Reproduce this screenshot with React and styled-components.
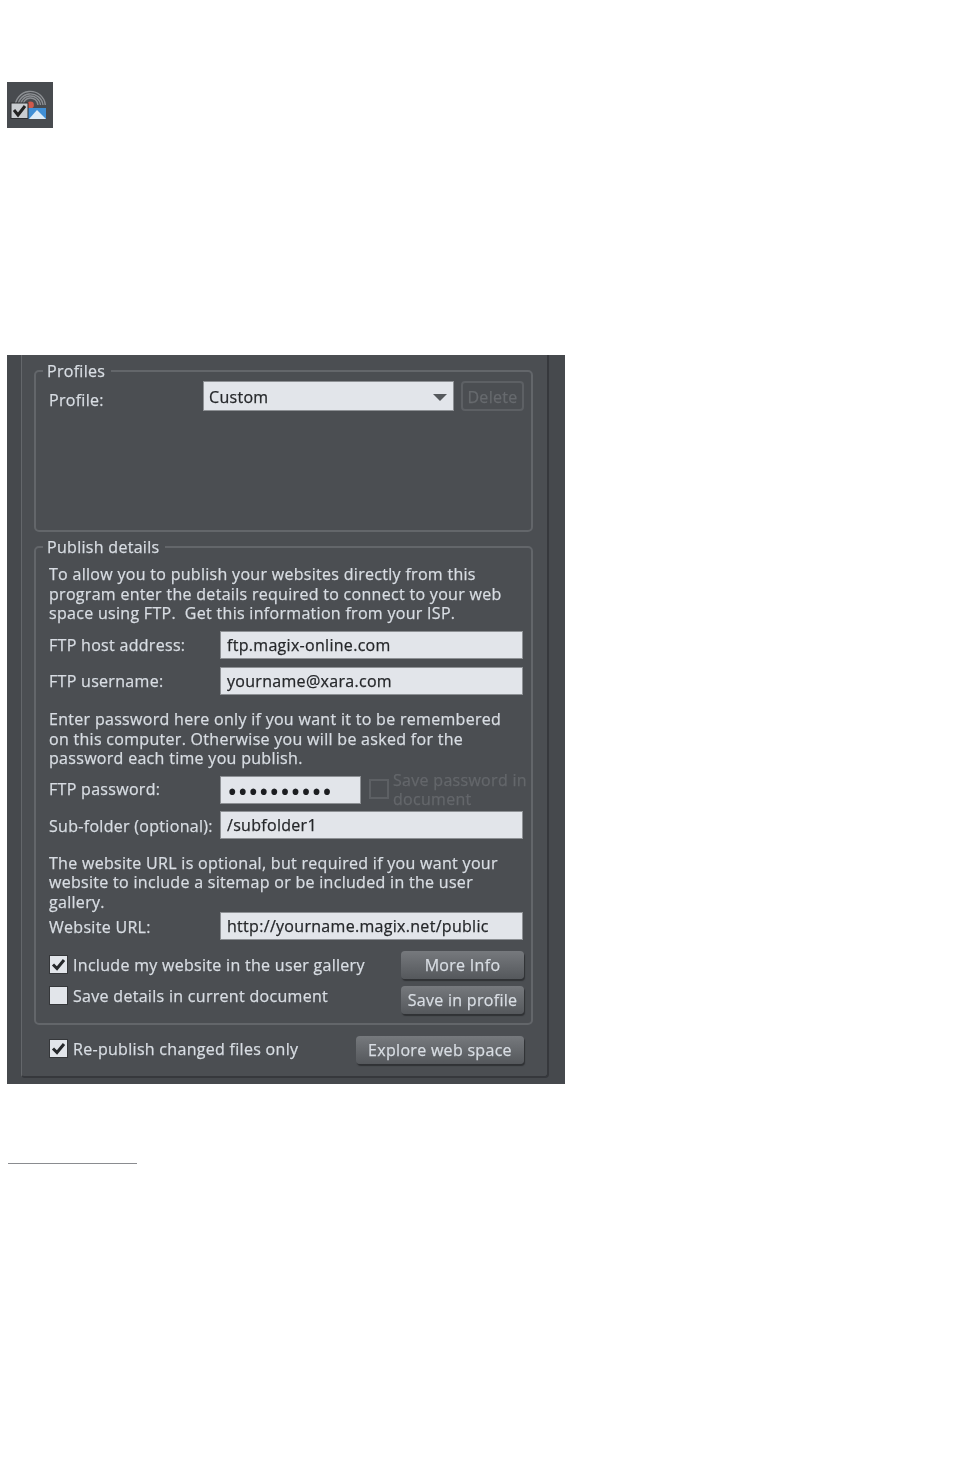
import React from "react";
import styled, { createGlobalStyle } from "styled-components";

const Global = createGlobalStyle`
  html, body { margin: 0; padding: 0; background: #fff; }
  body { font-family: "Open Sans", "Liberation Sans", sans-serif; }
`;
const Page = styled.div`
  width: 962px;
  height: 1457px;
  padding: 82px 0 0 7px;
  box-sizing: border-box;
  overflow: hidden;
`;
const AppIcon = styled.svg`
  display: block;
  width: 46px;
  height: 46px;
  filter: blur(0.6px);
`;
const Panel = styled.section`
  width: 558px;
  height: 729px;
  margin-top: 227px;
  box-sizing: border-box;
  background: #46494d;
  filter: blur(0.5px);
  color: #d8dde3;
  font-size: 16px;
  letter-spacing: 0.3px;
  line-height: 19.5px;
  -webkit-text-stroke: 0.25px currentColor;
`;
const Frame = styled.div`
  margin-left: 14px;
  width: 528px;
  height: 723px;
  box-sizing: border-box;
  background: #4b4e52;
  border-left: 1px solid #64676b;
  border-right: 2px solid #36383c;
  border-bottom: 2px solid #36383c;
  border-radius: 0 0 4px 4px;
  padding: 6px 14px 0 12px;
`;
const Group = styled.fieldset`
  margin: 0 0 5px;
  padding: ${(p) => p.$pad};
  height: ${(p) => p.$h}px;
  box-sizing: border-box;
  border: 2px solid #63666a;
  border-radius: 5px;
  min-width: 0;
`;
const Legend = styled.legend`
  margin-left: -6px;
  padding: 0 6px 0 4px;
  height: 20px;
  line-height: 20px;
`;
const Row = styled.div`
  display: flex;
  align-items: center;
  margin-top: ${(p) => p.$mt || 0}px;
  height: ${(p) => p.$h || 28}px;
`;
const Label = styled.div`
  width: ${(p) => p.$w || 171}px;
  flex: none;
  white-space: nowrap;
  padding-top: ${(p) => (p.$dy || 0) * 2}px;
`;
const Field = styled.div`
  flex: ${(p) => (p.$w ? "none" : 1)};
  width: ${(p) => (p.$w ? `${p.$w}px` : "auto")};
  height: 100%;
  box-sizing: border-box;
  background: #e2e5ea;
  border: 1px solid #8d9094;
  color: #25272a;
  padding-left: 6px;
  line-height: 27px;
  white-space: nowrap;
`;
const Dots = styled(Field)`
  font-size: 28px;
  letter-spacing: 0;
  line-height: 28px;
  padding-left: 6px;
  color: #1c1e21;
  -webkit-text-stroke: 0;
`;
const Select = styled(Field)`
  flex: none;
  width: 251px;
  padding: 2px 6px 0 5px;
  line-height: 26px;
  display: flex;
  align-items: center;
  justify-content: space-between;
`;
const Caret = styled.span`
  width: 0;
  height: 0;
  border-left: 7px solid transparent;
  border-right: 7px solid transparent;
  border-top: 7px solid #55585c;
`;
const Ghost = styled.div`
  flex: none;
  width: 63px;
  height: 30px;
  margin-left: 7px;
  box-sizing: border-box;
  border: 2px solid #5d6064;
  border-radius: 4px;
  color: #676a6e;
  text-align: center;
  line-height: 28px;
  white-space: nowrap;
`;
const Para = styled.p`
  margin: ${(p) => p.$mt}px 0 0;
  white-space: nowrap;
`;
const Disabled = styled.div`
  flex: none;
  margin-left: 8px;
  display: flex;
  gap: 4px;
  color: #64676b;
  line-height: 19px;
  white-space: nowrap;
`;
const EmptyBox = styled.span`
  flex: none;
  margin-top: 8px;
  width: 20px;
  height: 20px;
  box-sizing: border-box;
  border: 2px solid #5d6064;
`;
const Checks = styled.div`
  display: flex;
  justify-content: space-between;
  margin: 11px -1px 0 0;
`;
const CheckCol = styled.div`
  display: flex;
  flex-direction: column;
  gap: 13px;
  padding: 4px 0 0 1px;
`;
const CheckRow = styled.div`
  display: flex;
  align-items: center;
  gap: 6px;
  height: 18px;
  white-space: nowrap;
  margin-bottom: ${(p) => p.$lift || 0}px;
`;
const CheckText = styled.span`
  padding-top: 4px;
`;
const Box = styled.span`
  flex: none;
  width: 17px;
  height: 17px;
  background: #e2e5ea;
  box-shadow: 0 0 0 1px #35373a;
  display: flex;
  align-items: center;
  justify-content: center;
`;
const ButtonCol = styled.div`
  display: flex;
  flex-direction: column;
  gap: 7px;
`;
const Button = styled.button`
  display: block;
  width: ${(p) => p.$w}px;
  height: 28px;
  margin: 0;
  padding: 0;
  border: 0;
  border-radius: 4px;
  background: linear-gradient(#76797d, #55585c);
  box-shadow: 1px 2px 1px #303235;
  color: #d8dde3;
  font: inherit;
  letter-spacing: inherit;
  -webkit-text-stroke: inherit;
  line-height: 28px;
  white-space: nowrap;
`;
const Bottom = styled.div`
  display: flex;
  align-items: center;
  justify-content: space-between;
  height: 28px;
  margin-top: 11px;
  padding: 0 9px 0 16px;
`;
const Rule = styled.hr`
  width: 129px;
  height: 1px;
  margin: 79px 0 0 1px;
  border: 0;
  background: #8a8c90;
`;

const Tick = () => (
  <svg width="15" height="13" viewBox="0 0 15 13">
    <path d="M2 6.5 L6 10.5 L13 2" fill="none" stroke="#26282b" strokeWidth="3" />
  </svg>
);

const Check = ({ on, lift, children }) => (
  <CheckRow $lift={lift}>
    <Box>{on && <Tick />}</Box>
    <CheckText>{children}</CheckText>
  </CheckRow>
);

export default function App() {
  return (
    <Page>
      <Global />
      <AppIcon viewBox="0 0 46 46">
        <rect width="46" height="46" fill="#484b4f" />
        <g fill="none" stroke="#8d9094" strokeWidth="1.4">
          <path d="M8.3 26 A15 15 0 0 1 38.3 23" />
          <path d="M11 26 A12.5 12.5 0 0 1 36 23" />
          <path d="M13.5 25 A10 10 0 0 1 33.5 23" />
          <path d="M16 24 A7.5 7.5 0 0 1 31 23" />
        </g>
        <circle cx="23.5" cy="23" r="3.4" fill="#cf5a4c" />
        <rect x="21" y="26" width="18" height="11" fill="#3f8fd6" />
        <path d="M22 37 L30 28 L39 37Z" fill="#dcebf7" />
        <rect x="4" y="21" width="17" height="15.5" fill="#c9cdd1" stroke="#2c2e31" />
        <path d="M7 28 L11 33 L18 24" fill="none" stroke="#222" strokeWidth="3" />
      </AppIcon>
      <Panel>
        <Frame>
          <Group $h={171} $pad="0 8px 0 13px">
            <Legend>Profiles</Legend>
            <Row $h={30}>
              <Label $w={154} $dy={4.5}>Profile:</Label>
              <Select>Custom<Caret /></Select>
              <Ghost>Delete</Ghost>
            </Row>
          </Group>
          <Group $h={488} $pad="8px 8px 0 13px">
            <Legend>Publish details</Legend>
            <Para $mt={0}>
              To allow you to publish your websites directly from this<br />
              program enter the details required to connect to your web<br />
              space using FTP.&nbsp; Get this information from your ISP.
            </Para>
            <Row $mt={7.5}><Label $dy={1}>FTP host address:</Label><Field>ftp.magix-online.com</Field></Row>
            <Row $mt={8}><Label $dy={1}>FTP username:</Label><Field>yourname@xara.com</Field></Row>
            <Para $mt={15}>
              Enter password here only if you want it to be remembered<br />
              on this computer. Otherwise you will be asked for the<br />
              password each time you publish.
            </Para>
            <Row $mt={7}>
              <Label>FTP password:</Label>
              <Dots $w={141}>••••••••••</Dots>
              <Disabled>
                <EmptyBox />
                <span>Save password in<br />document</span>
              </Disabled>
            </Row>
            <Row $mt={7}><Label $dy={2.5}>Sub-folder (optional):</Label><Field>/subfolder1</Field></Row>
            <Para $mt={15}>
              The website URL is optional, but required if you want your<br />
              website to include a sitemap or be included in the user<br />
              gallery.
            </Para>
            <Row><Label $dy={1.5}>Website URL:</Label><Field>http://yourname.magix.net/public</Field></Row>
            <Checks>
              <CheckCol>
                <Check on>Include my website in the user gallery</Check>
                <Check>Save details in current document</Check>
              </CheckCol>
              <ButtonCol>
                <Button $w={123}>More Info</Button>
                <Button $w={123}>Save in profile</Button>
              </ButtonCol>
            </Checks>
          </Group>
          <Bottom>
            <Check on lift={4}>Re-publish changed files only</Check>
            <Button $w={168}>Explore web space</Button>
          </Bottom>
        </Frame>
      </Panel>
      <Rule />
    </Page>
  );
}
